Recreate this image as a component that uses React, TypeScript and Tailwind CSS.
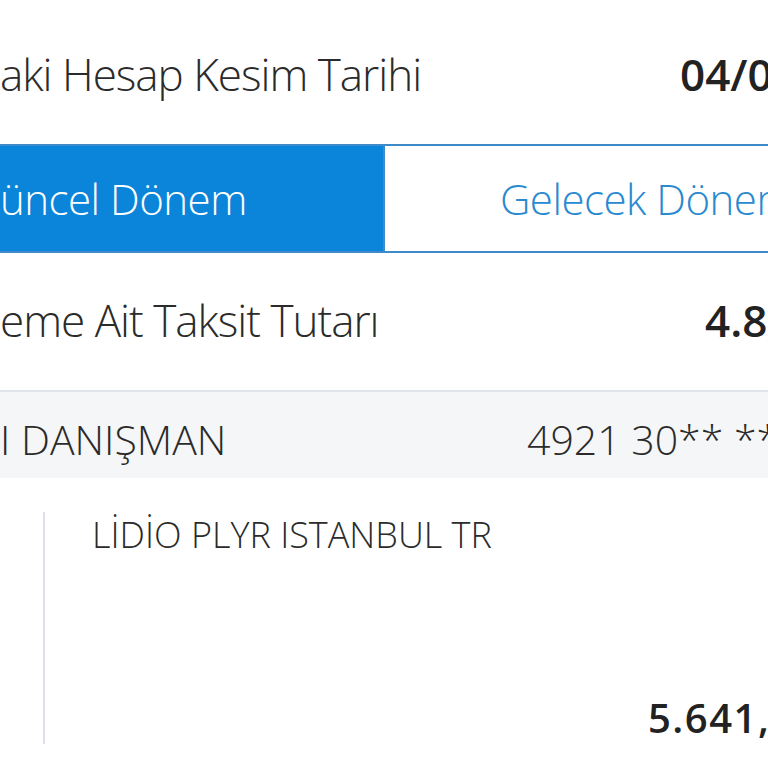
import React from "react";

const font = { fontFamily: '"Open Sans", "Noto Sans", sans-serif' };

export default function App() {
  return (
    <div
      className="w-[768px] h-[768px] overflow-hidden bg-white flex flex-col text-[#2b2b2b]"
      style={font}
    >
      {/* Row 1 */}
      <div className="h-[144px] flex items-center whitespace-nowrap shrink-0 pt-[4px]">
        <div className="w-[680px] shrink-0 text-[44px] font-light leading-none tracking-[-1px]">
          aki Hesap Kesim Tarihi
        </div>
        <div className="shrink-0 text-[44px] font-semibold leading-none text-[#222]">
          04/05/2024
        </div>
      </div>

      {/* Tabs */}
      <div className="h-[109px] flex shrink-0 border-y-2 border-[#3f8ac8] whitespace-nowrap">
        <div className="w-[383px] shrink-0 bg-[#0b85d9] flex items-center text-white text-[42px] font-light leading-none tracking-[-0.5px]">
          üncel Dönem
        </div>
        <div className="flex-1 flex items-center border-l-2 border-[#3f8ac8] bg-white pl-[115px] text-[#2a8ad0] text-[42px] font-light leading-none tracking-[-0.5px]">
          Gelecek Dönem
        </div>
      </div>

      {/* Row 3 */}
      <div className="h-[137px] flex items-center whitespace-nowrap shrink-0 pb-[4px]">
        <div className="w-[705px] shrink-0 text-[44px] font-light leading-none tracking-[-1px]">
          eme Ait Taksit Tutarı
        </div>
        <div className="shrink-0 text-[44px] font-semibold leading-none text-[#222]">
          4.812,50 TL
        </div>
      </div>

      {/* Card header */}
      <div className="h-[88px] shrink-0 border-t-2 border-[#e1e4e8] bg-[#f5f6f8] flex items-center whitespace-nowrap pt-[8px]">
        <div className="w-[527px] shrink-0 text-[41px] font-light leading-none">
          I DANIŞMAN
        </div>
        <div className="shrink-0 text-[41px] font-light leading-none">
          4921 30** **** 1234
        </div>
      </div>

      {/* Detail */}
      <div className="flex-1 pt-[34px] pb-[24px] pl-[43px]">
        <div className="h-full border-l-2 border-[#dde1e8] flex flex-col whitespace-nowrap">
          <div className="pl-[47px] pt-[5px] text-[36px] font-light leading-none">
            LİDİO PLYR ISTANBUL TR
          </div>
          <div className="mt-auto pl-[603px] pb-[6px] text-[40px] font-semibold leading-none text-[#222] tracking-[1.5px]">
            5.641,20 TL
          </div>
        </div>
      </div>
    </div>
  );
}
